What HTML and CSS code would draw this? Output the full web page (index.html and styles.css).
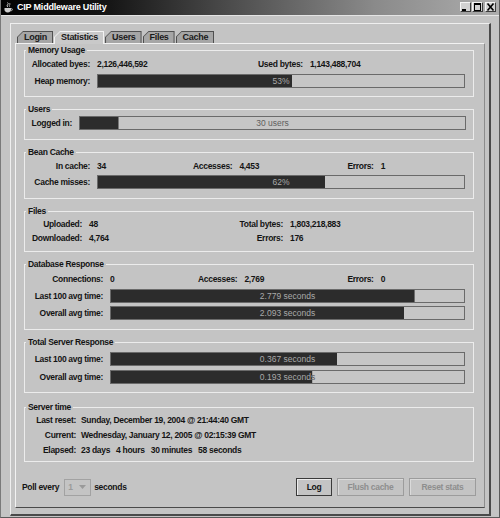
FILE: index.html
```html
<!DOCTYPE html>
<html>
<head>
<meta charset="utf-8">
<title>CIP Middleware Utility</title>
<link rel="stylesheet" href="styles.css">
</head>
<body>
<div class="window">
  <div class="titlebar">
    <svg class="app-icon" width="9" height="11" viewBox="0 0 9 11">
      <path d="M3.5 0.5 q1.5 1.2 0 2.4 q-1.2 1 0.4 2.2" fill="none" stroke="#d8d8d8" stroke-width="0.9"/>
      <path d="M5.5 1 q1.2 1 0 2 q-1 0.9 0.3 1.8" fill="none" stroke="#bcbcbc" stroke-width="0.8"/>
      <path d="M0.5 6 h6.5 v1.6 q0 2.8 -3.25 2.8 q-3.25 0 -3.25 -2.8 z" fill="#cfcfcf"/>
      <path d="M7 6.6 q1.8 0 1.4 1.3 q-0.4 1 -1.8 1" fill="none" stroke="#cfcfcf" stroke-width="0.8"/>
    </svg>
    <span class="title">CIP Middleware Utility</span>
    <div class="winbtns">
      <span class="wbtn"><svg width="9" height="8" viewBox="0 0 9 8"><rect x="1" y="6" width="4" height="2" fill="#000"/></svg></span>
      <span class="wbtn"><svg width="9" height="8" viewBox="0 0 9 8"><rect x="1.5" y="0.5" width="6" height="7" fill="none" stroke="#000"/><rect x="1" y="0" width="7" height="2" fill="#000"/></svg></span>
      <span class="wbtn wbtn-close"><svg width="9" height="8" viewBox="0 0 9 8"><path d="M1.5 0.5 L7.5 7.5 M7.5 0.5 L1.5 7.5" stroke="#000" stroke-width="1.6"/></svg></span>
    </div>
  </div>
  <div class="client">
    <div class="frame">
      <div class="tabs">
        <div class="tab"><span class="tab-in">Login</span></div>
        <div class="tab active"><span class="tab-in">Statistics</span></div>
        <div class="tab"><span class="tab-in">Users</span></div>
        <div class="tab"><span class="tab-in">Files</span></div>
        <div class="tab"><span class="tab-in">Cache</span></div>
      </div>
      <div class="panel">
        <fieldset class="group g-mem">
          <legend>Memory Usage</legend>
          <div class="rows">
            <div class="row c-mem1"><span class="lbl">Allocated byes:</span><span class="val">2,126,446,592</span><span class="lbl">Used bytes:</span><span class="val">1,143,488,704</span></div>
            <div class="row c-bar72"><span class="lbl">Heap memory:</span><div class="bar" style="--p:53%"><span class="bar-text">53%</span><span class="bar-fill">53%</span></div></div>
          </div>
        </fieldset>

        <fieldset class="group g-users">
          <legend>Users</legend>
          <div class="rows">
            <div class="row c-users"><span class="lbl">Logged in:</span><div class="bar" style="--p:10%"><span class="bar-text">30 users</span><span class="bar-fill">30 users</span></div></div>
          </div>
        </fieldset>

        <fieldset class="group g-bean">
          <legend>Bean Cache</legend>
          <div class="rows">
            <div class="row c-bean1"><span class="lbl">In cache:</span><span class="val">34</span><span class="lbl">Accesses:</span><span class="val">4,453</span><span class="lbl">Errors:</span><span class="val">1</span></div>
            <div class="row c-bar72"><span class="lbl">Cache misses:</span><div class="bar" style="--p:62%"><span class="bar-text">62%</span><span class="bar-fill">62%</span></div></div>
          </div>
        </fieldset>

        <fieldset class="group g-files">
          <legend>Files</legend>
          <div class="rows">
            <div class="row c-files"><span class="lbl">Uploaded:</span><span class="val">48</span><span class="lbl">Total bytes:</span><span class="val">1,803,218,883</span></div>
            <div class="row c-files"><span class="lbl">Downloaded:</span><span class="val">4,764</span><span class="lbl">Errors:</span><span class="val">176</span></div>
          </div>
        </fieldset>

        <fieldset class="group g-db">
          <legend>Database Response</legend>
          <div class="rows">
            <div class="row c-db1"><span class="lbl">Connections:</span><span class="val">0</span><span class="lbl">Accesses:</span><span class="val">2,769</span><span class="lbl">Errors:</span><span class="val">0</span></div>
            <div class="row c-bar85"><span class="lbl">Last 100 avg time:</span><div class="bar" style="--p:86%"><span class="bar-text">2.779 seconds</span><span class="bar-fill">2.779 seconds</span></div></div>
            <div class="row c-bar85"><span class="lbl">Overall avg time:</span><div class="bar" style="--p:83%"><span class="bar-text">2.093 seconds</span><span class="bar-fill">2.093 seconds</span></div></div>
          </div>
        </fieldset>

        <fieldset class="group g-total">
          <legend>Total Server Response</legend>
          <div class="rows">
            <div class="row c-bar85"><span class="lbl">Last 100 avg time:</span><div class="bar" style="--p:64%"><span class="bar-text">0.367 seconds</span><span class="bar-fill">0.367 seconds</span></div></div>
            <div class="row c-bar85"><span class="lbl">Overall avg time:</span><div class="bar" style="--p:57%"><span class="bar-text">0.193 seconds</span><span class="bar-fill">0.193 seconds</span></div></div>
          </div>
        </fieldset>

        <fieldset class="group g-time">
          <legend>Server time</legend>
          <div class="rows">
            <div class="row c-time"><span class="lbl">Last reset:</span><span class="val">Sunday, December 19, 2004 @ 21:44:40 GMT</span></div>
            <div class="row c-time"><span class="lbl">Current:</span><span class="val">Wednesday, January 12, 2005 @ 02:15:39 GMT</span></div>
            <div class="row c-time"><span class="lbl">Elapsed:</span><span class="val elapsed"><span>23 days</span><span>4 hours</span><span>30 minutes</span><span>58 seconds</span></span></div>
          </div>
        </fieldset>

        <div class="controls">
          <span class="poll-label">Poll every</span>
          <span class="combo"><span class="combo-val">1</span><svg class="combo-arrow" width="7" height="4" viewBox="0 0 7 4"><path d="M0 0 H7 L3.5 4 Z" fill="#9a9a9a"/></svg></span>
          <span class="poll-label">seconds</span>
          <div class="buttons">
            <button class="btn btn-log">Log</button>
            <button class="btn btn-wide" disabled>Flush cache</button>
            <button class="btn btn-wide" disabled>Reset stats</button>
          </div>
        </div>
      </div>
    </div>
  </div>
</div>
</body>
</html>
```

FILE: styles.css
```css
* { box-sizing: border-box; }
html, body { margin: 0; padding: 0; }
body {
  width: 500px;
  height: 518px;
  overflow: hidden;
  background: #c4c4c4;
  font-family: "Liberation Sans", Arial, sans-serif;
  font-size: 8.5px;
  letter-spacing: -0.3px;
  font-weight: bold;
  color: #141414;
}
.window {
  width: 500px;
  height: 518px;
  display: flex;
  flex-direction: column;
  border-left: 1px solid #7a7a7a;
  border-right: 1px solid #5a5a5a;
  border-bottom: 1px solid #5a5a5a;
}
.titlebar {
  flex: none;
  height: 16px;
  display: flex;
  align-items: center;
  padding: 0 3px 1px 3px;
  border-bottom: 1px solid #e4e4e4;
  background: linear-gradient(to right, #030303 0%, #161616 22%, #4a4a4a 45%, #8a8a8a 75%, #adadad 100%);
}
.app-icon { flex: none; margin-right: 4px; }
.title { color: #ffffff; font-size: 9px; letter-spacing: -0.2px; }
.winbtns { margin-left: auto; display: flex; gap: 1px; }
.wbtn {
  width: 11px;
  height: 10px;
  display: flex;
  align-items: center;
  justify-content: center;
  background: #d2d2d2;
  border-style: solid;
  border-width: 1px;
  border-color: #f4f4f4 #3c3c3c #3c3c3c #f4f4f4;
}
.wbtn-close { margin-left: 1px; }
.client {
  flex: 1;
  display: flex;
  flex-direction: column;
  padding: 7px 8px 1px 9px;
}
.frame {
  flex: 1;
  display: flex;
  flex-direction: column;
  border-style: solid;
  border-width: 1px 2px 2px 1px;
  border-color: #efefef #4a4a4a #4a4a4a #efefef;
  padding: 7px 4px 6px 4px;
}
.tabs {
  flex: none;
  height: 12px;
  display: flex;
  gap: 1px;
  padding-left: 2px;
  position: relative;
  z-index: 1;
}
.tab {
  height: 12px;
  padding: 1px 1px 0 1px;
  background: #505050;
  clip-path: polygon(0 6px, 6px 0, 100% 0, 100% 100%, 0 100%);
}
.tab-in {
  display: block;
  height: 11px;
  line-height: 11px;
  padding: 0 5px 0 6px;
  font-size: 9px;
  background: #a6a6a6;
  color: #1a1a1a;
  clip-path: polygon(0 5px, 5px 0, 100% 0, 100% 100%, 0 100%);
}
.tab.active { background: #f2f2f2; height: 13px; margin-bottom: -1px; }
.tab.active .tab-in { background: #c9c9c9; height: 12px; }
.panel {
  flex: 1;
  display: flex;
  flex-direction: column;
  border-style: solid;
  border-width: 1px;
  border-color: #f2f2f2 #8c8c8c #4a4a4a #f2f2f2;
  padding: 1px 8px 0 6px;
}
.group {
  margin: 0 2px;
  padding: 0;
  min-width: 0;
  border: 1px solid #ececec;
}
.group legend {
  padding: 0 2px;
  margin-left: 1px;
  line-height: 11px;
}
.rows { display: flex; flex-direction: column; }
.g-mem .rows { padding: 1px 0 8px; gap: 3px; }
.g-users { margin-top: 7px; }
.g-users .rows { padding: 1px 0 9px; }
.g-bean { margin-top: 7px; }
.g-bean .rows { padding: 1px 0 9px; gap: 2px; }
.g-files { margin-top: 7px; }
.g-files .rows { padding: 0 0 6px; }
.g-db { margin-top: 7px; }
.g-db .rows { padding: 2px 0 9px; gap: 3px; }
.g-total { margin-top: 7px; }
.g-total .rows { padding: 4px 0 8px; gap: 4px; }
.g-time { margin-top: 9px; }
.g-time .rows { padding: 0 0 4px; gap: 1px; }

.row {
  display: grid;
  align-items: center;
  height: 14px;
  line-height: 14px;
  white-space: nowrap;
}
.lbl { text-align: right; padding-right: 7px; }
.c-mem1 { grid-template-columns: 72px 161px auto 1fr; }
.c-bar72 { grid-template-columns: 72px 368px; }
.c-users { grid-template-columns: 54px 387px; }
.c-bean1 { grid-template-columns: 72px 96px auto 108px auto 1fr; }
.c-files { grid-template-columns: 64px 133px 68px 1fr; }
.c-db1 { grid-template-columns: 85px 88px auto 103px auto 1fr; }
.c-bar85 { grid-template-columns: 85px 355px; }
.c-time { grid-template-columns: 56px 1fr; }
.c-time .lbl { padding-right: 5px; }
.elapsed { display: flex; gap: 6px; }

.bar {
  position: relative;
  height: 14px;
  border: 1px solid #6a6a6a;
  background: #c6c6c6;
  text-align: center;
  font-weight: normal;
  letter-spacing: 0;
  line-height: 12px;
  color: #5e5e5e;
}
.bar-text { display: block; }
.bar-fill {
  position: absolute;
  inset: 0;
  background: #2c2c2c;
  color: #a9a9a9;
  clip-path: inset(0 calc(100% - var(--p)) 0 0);
}

.controls {
  display: flex;
  align-items: center;
  height: 18px;
  margin-top: 16px;
}
.combo {
  width: 27px;
  height: 17px;
  margin: 0 3px 0 5px;
  display: flex;
  align-items: center;
  justify-content: space-between;
  padding: 0 4px 0 3px;
  border: 1px solid #a2a2a2;
  color: #9a9a9a;
}
.buttons { margin-left: auto; display: flex; gap: 5px; }
.btn {
  height: 18px;
  padding: 0;
  font-family: inherit;
  font-size: 8.5px;
  letter-spacing: -0.3px;
  font-weight: bold;
  background: #c4c4c4;
  color: #141414;
  border: 1px solid #3a3a3a;
  box-shadow: inset 1px 1px 0 #ececec;
}
.btn-log { width: 36px; }
.btn-wide { width: 67px; }
.btn:disabled { color: #8e8e8e; border-color: #9c9c9c; box-shadow: inset 1px 1px 0 #dadada; }
```
